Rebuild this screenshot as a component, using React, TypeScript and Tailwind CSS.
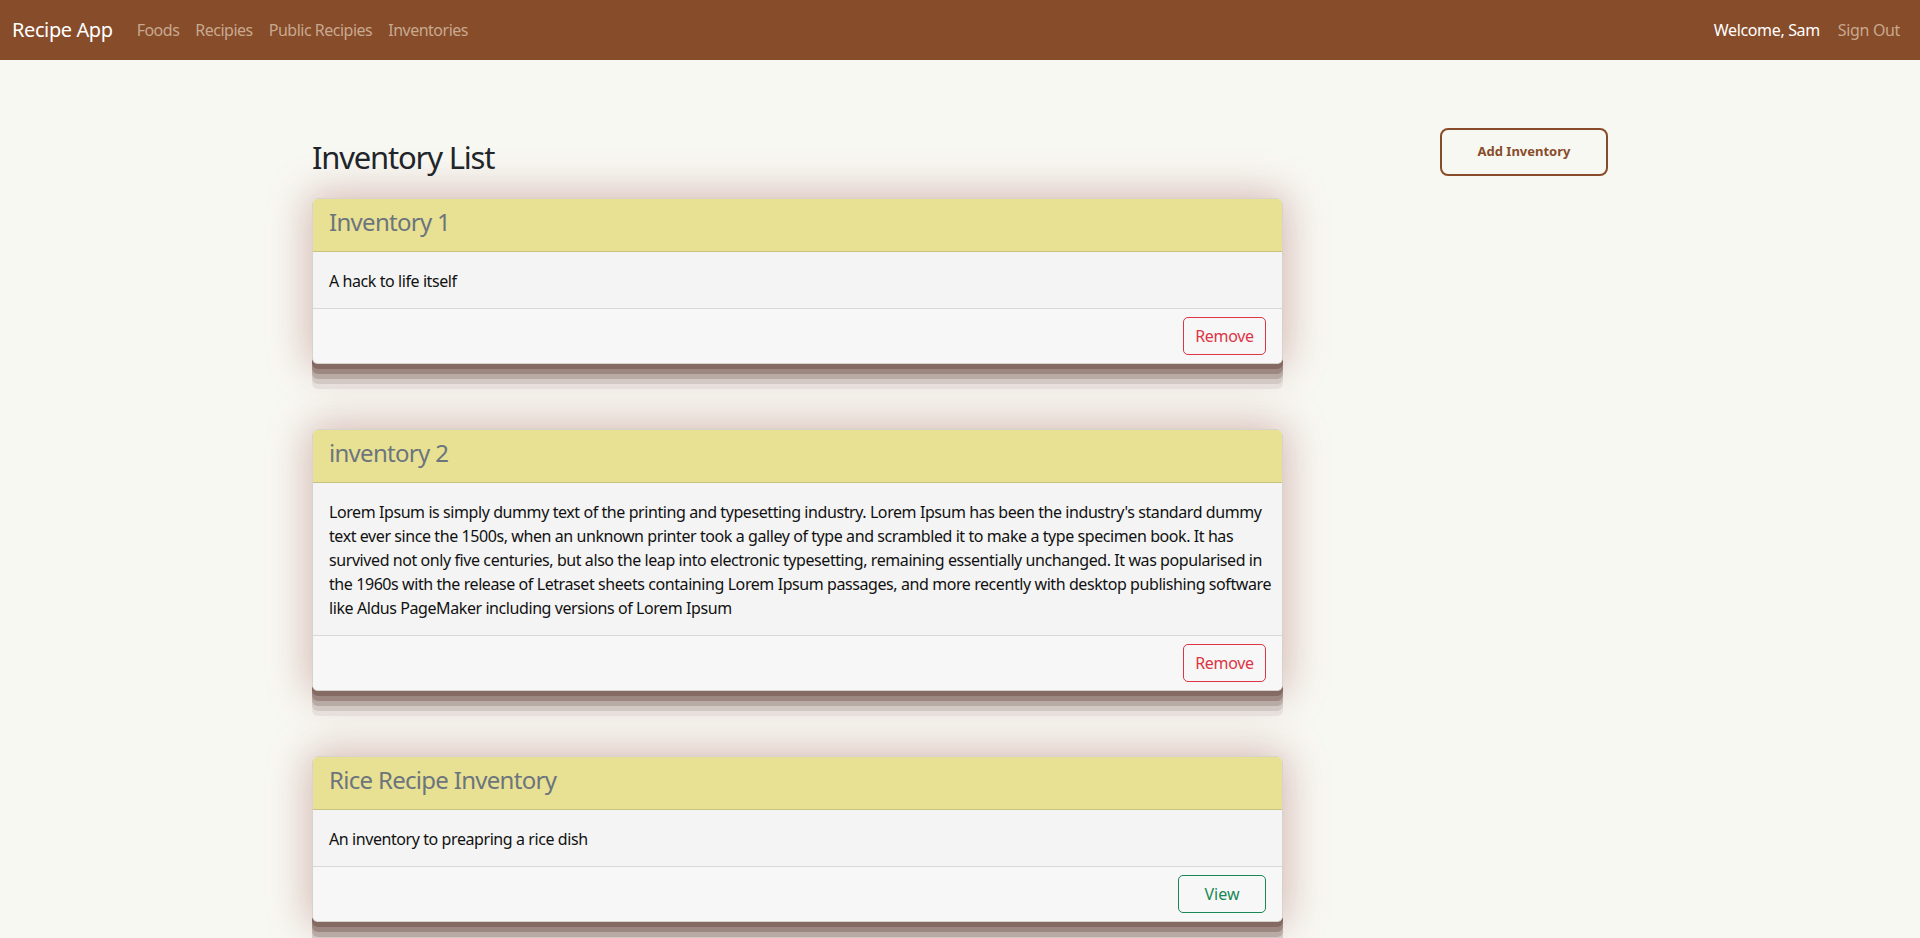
import React from "react";

const font = { fontFamily: '"Noto Sans", "Open Sans", sans-serif' };

type Inv = { title: string; body: React.ReactNode; action: "Remove" | "View" };

const lorem = (
  <>
    Lorem Ipsum is simply dummy text of the printing and typesetting industry. Lorem Ipsum has been the industry's standard dummy
    <br />
    text ever since the 1500s, when an unknown printer took a galley of type and scrambled it to make a type specimen book. It has
    <br />
    survived not only five centuries, but also the leap into electronic typesetting, remaining essentially unchanged. It was popularised in
    <br />
    the 1960s with the release of Letraset sheets containing Lorem Ipsum passages, and more recently with desktop publishing software
    <br />
    like Aldus PageMaker including versions of Lorem Ipsum
  </>
);

const items: Inv[] = [
  { title: "Inventory 1", body: "A hack to life itself", action: "Remove" },
  { title: "inventory 2", body: lorem, action: "Remove" },
  { title: "Rice Recipe Inventory", body: "An inventory to preapring a rice dish", action: "View" },
];

function Card({ item }: { item: Inv }) {
  return (
    <div className="w-[971px] rounded-[6px] border border-[#d6d3cc] mb-[65px] shadow-[0_5px_0_#846a62,0_10px_0_#9c8881,0_15px_0_#b8aaa4,0_20px_0_#d3cac6,0_25px_0_#e7e1dd,0_0_40px_4px_rgba(150,70,60,0.36)]">
      <div className="h-[53px] bg-[#e8e193] border-b border-[#c9c27e] rounded-t-[5px] px-4 pt-[8px]">
        <h4 className="text-[24px] leading-[29px] text-[#6c757d] tracking-[-0.7px]">{item.title}</h4>
      </div>
      <div className="bg-[#f4f4f4] px-4 pt-[17px] pb-[15px] text-[16px] leading-[24px] text-[#111] tracking-[-0.42px] whitespace-nowrap">
        {item.body}
      </div>
      <div className="h-[55px] bg-[#f7f7f7] border-t border-[#d8d8d8] px-4 flex items-center justify-end rounded-b-[5px]">
        {item.action === "Remove" ? (
          <button className="h-[38px] w-[83px] rounded-[5px] border border-[#dc3545] text-[#dc3545] text-[16px] tracking-[-0.3px]">
            Remove
          </button>
        ) : (
          <button className="h-[38px] w-[88px] rounded-[5px] border border-[#198754] text-[#198754] text-[16px]">
            View
          </button>
        )}
      </div>
    </div>
  );
}

export default function App() {
  return (
    <div className="min-h-[938px] bg-[#f8f8f3]" style={font}>
      <nav className="h-[60px] bg-[#874c29] flex items-center justify-between px-3">
        <div className="flex items-center">
          <span className="text-[20px] text-white tracking-[-0.4px] mr-[24px]">Recipe App</span>
          <div className="flex items-center gap-[16px] text-[16px] text-[#c8a990] tracking-[-0.5px]">
            <span>Foods</span>
            <span>Recipies</span>
            <span>Public Recipies</span>
            <span>Inventories</span>
          </div>
        </div>
        <div className="flex items-center gap-[18px] text-[16px] tracking-[-0.35px] pr-2">
          <span className="text-white">Welcome, Sam</span>
          <span className="text-[#c8a990]">Sign Out</span>
        </div>
      </nav>
      <div className="w-[1296px] mx-auto pt-[68px]">
        <div className="flex items-end justify-between">
          <h2 className="text-[31px] leading-[38px] text-[#212529] tracking-[-1.2px]">Inventory List</h2>
          <button className="h-[48px] w-[168px] rounded-[8px] border-2 border-[#874c29] text-[#874c29] text-[13px] font-bold">
            Add Inventory
          </button>
        </div>
        <div className="mt-[22px]">
          {items.map((it) => (
            <Card key={it.title} item={it} />
          ))}
        </div>
      </div>
    </div>
  );
}
